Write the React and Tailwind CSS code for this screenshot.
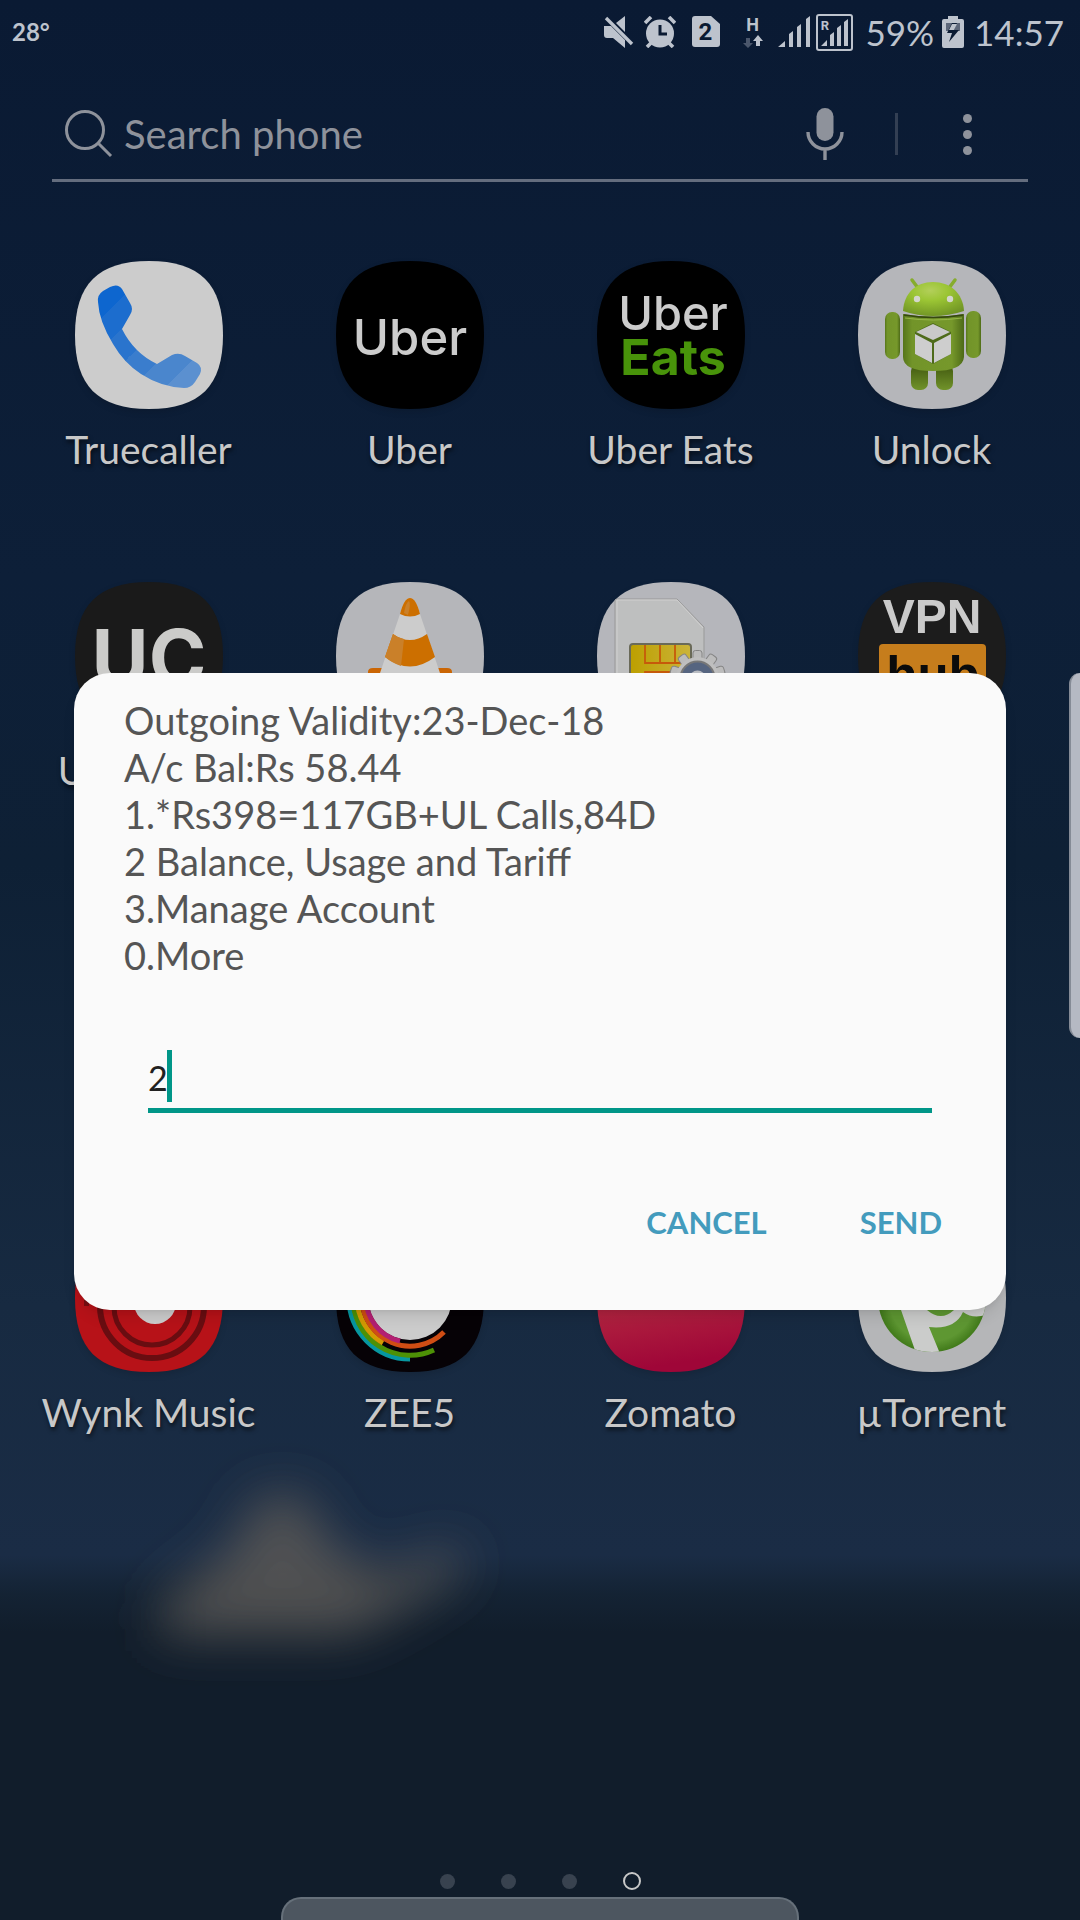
import React from "react";

const SQUIRCLE =
  "M0 74C0 23 23 0 74 0S148 23 148 74 125 148 74 148 0 125 0 74Z";

function Tile({ id, fill, children }) {
  return (
    <svg viewBox="0 0 148 148" className="size-[148px] drop-shadow-md" aria-hidden="true">
      <clipPath id={`${id}-clip`}>
        <path d={SQUIRCLE} />
      </clipPath>
      <g clipPath={`url(#${id}-clip)`}>
        <rect width="148" height="148" fill={fill} />
        {children}
      </g>
    </svg>
  );
}

function TruecallerIcon() {
  const bands = [
    ["0%", "27.7%", "#0d66cf"],
    ["27.7%", "38.3%", "#1c6dce"],
    ["38.3%", "50%", "#2a74cd"],
    ["50%", "61.3%", "#3a7dcd"],
    ["61.3%", "72.3%", "#4a86cd"],
    ["72.3%", "100%", "#5b90d0"],
  ];
  return (
    <Tile id="truecaller" fill="#cccccc">
      <linearGradient id="tc-bands" gradientUnits="userSpaceOnUse" x1="0" y1="0" x2="150" y2="150">
        {bands.map(([a, b, c]) => (
          <React.Fragment key={a}>
            <stop offset={a} stopColor={c} />
            <stop offset={b} stopColor={c} />
          </React.Fragment>
        ))}
      </linearGradient>
      <path
        fill="url(#tc-bands)"
        d="M23 41Q22 34 28 30L35 26Q43 22 47 28L55 42Q59 48 55 54L47 68Q59 92 82 103L97 94Q104 91 110 95L122 102Q128 106 125 113L120 121Q116 127 109 127Q86 126 66 113Q49 102 38 83Q24 60 23 41Z"
      />
    </Tile>
  );
}

function UberIcon() {
  return (
    <Tile id="uber" fill="#000000">
      <text x="74" y="94" textAnchor="middle" className="font-['Inter',sans-serif] text-[49px] font-medium" fill="#cccccc">
        Uber
      </text>
    </Tile>
  );
}

function UberEatsIcon() {
  return (
    <Tile id="ubereats" fill="#000000">
      <text x="76" y="69" textAnchor="middle" className="font-['Inter',sans-serif] text-[47px] font-medium" fill="#cccccc">
        Uber
      </text>
      <text x="76" y="114" textAnchor="middle" className="font-['Inter',sans-serif] text-[50px] font-bold" fill="#48930a">
        Eats
      </text>
    </Tile>
  );
}

function UnlockIcon() {
  return (
    <Tile id="unlock" fill="#b5b6ba">
      <radialGradient id="ul-head" cx="45%" cy="25%" r="85%">
        <stop offset="0" stopColor="#b3cf5a" />
        <stop offset=".35" stopColor="#9bc534" />
        <stop offset="1" stopColor="#698c22" />
      </radialGradient>
      <linearGradient id="ul-body" x1="0" x2="1" y1="0" y2="0">
        <stop offset="0" stopColor="#56751a" />
        <stop offset=".15" stopColor="#729429" />
        <stop offset=".8" stopColor="#76982b" />
        <stop offset="1" stopColor="#4d6a17" />
      </linearGradient>
      <linearGradient id="ul-leg" x1="0" x2="0" y1="0" y2="1">
        <stop offset="0" stopColor="#40570f" />
        <stop offset="1" stopColor="#71932a" />
      </linearGradient>
      <path d="M54 19l6 8M97 19l-6 8" stroke="#86ac2e" strokeWidth="3.5" strokeLinecap="round" />
      <rect x="53" y="103" width="17" height="26" rx="7" fill="url(#ul-leg)" />
      <rect x="78" y="103" width="17" height="26" rx="7" fill="url(#ul-leg)" />
      <rect x="27" y="51" width="15" height="47" rx="7" fill="url(#ul-body)" />
      <rect x="108" y="50" width="15" height="47" rx="7" fill="url(#ul-body)" />
      <path d="M45 50C46 32 58 21 75 21S105 32 106 50Q91 55 75 55T45 50Z" fill="url(#ul-head)" />
      <path d="M45 53Q75 58 106 53V96Q105 110 75 110T45 96Z" fill="url(#ul-body)" />
      <path d="M46 54Q75 59 105 54" fill="none" stroke="#35480f" strokeWidth="1.6" />
      <path d="M47 57Q75 61 104 57" fill="none" stroke="#96b64a" strokeWidth="1" />
      <circle cx="59" cy="38" r="3.2" fill="#d4d6cd" />
      <circle cx="92" cy="38" r="3.2" fill="#d4d6cd" />
      <path d="M57 71L75 62L93 71V93L75 103L57 93Z" fill="#4e6b1a" />
      <path d="M75 63L92 71L75 79L58 71Z" fill="#c9c9c9" />
      <path d="M57 73L74 82V102L57 93Z" fill="#cecece" />
      <path d="M93 73L76 82V102L93 93Z" fill="#cecece" />
    </Tile>
  );
}

function UrbanClapIcon() {
  return (
    <Tile id="urbanclap" fill="#1a1a1a">
      <text x="74" y="104" textAnchor="middle" className="font-['Inter',sans-serif] text-[78px] font-bold" fill="#cbcbc9">
        UC
      </text>
    </Tile>
  );
}

function VlcIcon() {
  return (
    <Tile id="vlc" fill="#b5b6ba">
      <path d="M32 96V90Q32 86 37 86H111Q116 86 116 90V148H32Z" fill="#cb6604" />
      <path d="M64 32Q68 16 74 16T84 32L104 91V110H44V91Z" fill="#cccccc" />
      <path d="M64 32Q68 16 74 16T84 32Q74 37 64 32Z" fill="#cc6f00" />
      <path d="M57 52Q74 64 91 52L99 75Q74 94 49 75Z" fill="#cc6f00" />
      <path d="M57 52Q62 56 68 57L65 84Q56 81 49 75Z" fill="#ca8029" />
      <path d="M68 31Q70 20 73 19Q75 21 72 33Z" fill="#ca8029" />
    </Tile>
  );
}

function SimIcon() {
  const teeth = [0, 36, 72, 108, 144, 180, 216, 252, 288, 324];
  return (
    <Tile id="sim" fill="#b5b6bb">
      <path d="M18 148V17H80L107 45V148Z" fill="#bebfbf" stroke="#999" strokeWidth="1" />
      <path d="M20 148V18H80L106 46" fill="none" stroke="#cfcfcf" strokeWidth="1" />
      <linearGradient id="sim-chip" x1="0" x2="1">
        <stop offset="0" stopColor="#bd9f00" />
        <stop offset="1" stopColor="#cbb43a" />
      </linearGradient>
      <rect x="33" y="62" width="61" height="60" rx="3" fill="url(#sim-chip)" stroke="#6a6a58" strokeWidth="2" />
      <path d="M48 63V81H94M63 63V81M78 63V81M48 100V90H80" fill="none" stroke="#c65a0a" strokeWidth="1.8" />
      <g stroke="#858585" strokeWidth="1">
        {teeth.map((a) => (
          <rect key={a} x="96" y="68.5" width="9" height="12" rx="2.5" fill="#bcbcbc" transform={`rotate(${a} 100.5 96.5)`} />
        ))}
      </g>
      <circle cx="100.5" cy="96.5" r="21.5" fill="#bfbfbf" />
      <circle cx="100.5" cy="96.5" r="17" fill="#566580" stroke="#777" strokeWidth="2" />
      <circle cx="100.5" cy="96.5" r="8" fill="#b8bbc1" />
    </Tile>
  );
}

function VpnHubIcon() {
  return (
    <Tile id="vpnhub" fill="#1c1c1c">
      <rect x="21" y="62" width="107" height="60" rx="4" fill="#c67d1c" />
      <text x="74" y="51" textAnchor="middle" className="font-['Liberation_Sans',sans-serif] text-[48px] font-bold" fill="#cacaca">
        VPN
      </text>
      <text x="75" y="111" textAnchor="middle" className="font-['Liberation_Sans',sans-serif] text-[51px] font-bold" fill="#0b0b0b">
        hub
      </text>
    </Tile>
  );
}

function WynkIcon() {
  return (
    <Tile id="wynk" fill="#b71218">
      <circle cx="77" cy="82" r="52" fill="none" stroke="#690d11" strokeWidth="6" />
      <circle cx="77" cy="83" r="38" fill="none" stroke="#690d11" strokeWidth="5" />
      <circle cx="80" cy="79" r="21" fill="#cccccc" />
      <path d="M9 74h5v8h-5z" fill="#7a0e12" />
    </Tile>
  );
}

function Zee5Icon() {
  return (
    <Tile id="zee5" fill="#060206">
      <circle cx="74" cy="74" r="42" fill="#cccccc" />
      <g fill="none" strokeWidth="5">
        <path d="M13 74A61 61 0 0 0 74 135" stroke="#0797a0" />
        <path d="M17 74A57 57 0 0 0 98 126" stroke="#4d9106" />
        <path d="M21 74A53 53 0 0 0 47 119" stroke="#d39a03" />
        <path d="M26 74A48 48 0 0 0 108 108" stroke="#cf4d14" />
        <path d="M30 74A44 44 0 0 0 64 117" stroke="#b31f72" />
      </g>
    </Tile>
  );
}

function ZomatoIcon() {
  return (
    <Tile id="zomato" fill="url(#zomato-fill)">
      <linearGradient id="zomato-fill" x1="0" y1="0" x2=".15" y2="1">
        <stop offset="0" stopColor="#bf3645" />
        <stop offset=".6" stopColor="#b0223f" />
        <stop offset="1" stopColor="#9f0638" />
      </linearGradient>
    </Tile>
  );
}

function UTorrentIcon() {
  return (
    <Tile id="utorrent" fill="#b5b6b8">
      <radialGradient id="ut-disc" cx="50%" cy="50%" r="50%">
        <stop offset=".8" stopColor="#5e9732" />
        <stop offset="1" stopColor="#417a1a" />
      </radialGradient>
      <clipPath id="ut-clip">
        <circle cx="74" cy="74" r="54" />
      </clipPath>
      <circle cx="74" cy="74" r="54" fill="url(#ut-disc)" />
      <g clipPath="url(#ut-clip)">
        <path d="M32 55H130V90Q116 96 105 88Q97 106 71 103L83 132H59L43 86Z" fill="#cbcccb" />
        <path d="M62 60L69 86Q83 98 96 86V60Z" fill="#5e9732" />
      </g>
    </Tile>
  );
}

const APPS = [
  { name: "Truecaller", Icon: TruecallerIcon, row: "row-start-1" },
  { name: "Uber", Icon: UberIcon, row: "row-start-1" },
  { name: "Uber Eats", Icon: UberEatsIcon, row: "row-start-1" },
  { name: "Unlock", Icon: UnlockIcon, row: "row-start-1" },
  { name: "UrbanClap", Icon: UrbanClapIcon, row: "row-start-2" },
  { name: "VLC", Icon: VlcIcon, row: "row-start-2", covered: true },
  { name: "SIM", Icon: SimIcon, row: "row-start-2", covered: true },
  { name: "VPNhub", Icon: VpnHubIcon, row: "row-start-2", covered: true },
  { name: "Wynk Music", Icon: WynkIcon, row: "row-start-4" },
  { name: "ZEE5", Icon: Zee5Icon, row: "row-start-4" },
  { name: "Zomato", Icon: ZomatoIcon, row: "row-start-4" },
  { name: "µTorrent", Icon: UTorrentIcon, row: "row-start-4" },
];

function StatusBar() {
  return (
    <header className="flex h-16 items-center justify-between pl-3 pr-4 text-[#bdc3cd]">
      <span className="text-[24px] font-bold">28°</span>
      <div className="flex items-center fill-current">
        <svg viewBox="0 0 30 32" className="h-8 w-[30px]" aria-label="Muted">
          <path d="M0 10H7L21 24V32L9 22H3Q0 22 0 19ZM21 0V16L12 7Z" />
          <path d="M2 2L28 28" stroke="currentColor" strokeWidth="3.4" />
        </svg>
        <svg viewBox="0 0 32 32" className="ml-[10px] size-8" aria-label="Alarm">
          <circle cx="16" cy="17.500" r="14" />
          <path d="M1 7L7 1M31 7L25 1M7 27L3 31M25 27L29 31" stroke="currentColor" strokeWidth="3.6" />
          <path d="M16 9V18H23" fill="none" stroke="#0a1a32" strokeWidth="3" />
        </svg>
        <svg viewBox="0 0 28 32" className="ml-4 h-8 w-7" aria-label="SIM 2">
          <path d="M3 0H19L28 8V28Q28 31 25 31H3Q0 31 0 28V3Q0 0 3 0Z" />
          <text x="13.500" y="24" textAnchor="middle" className="font-[Roboto,sans-serif] text-[24px] font-bold" fill="#0a1a32">2</text>
        </svg>
        <svg viewBox="0 0 20 34" className="ml-[23px] h-[34px] w-5" aria-label="HSPA data">
          <text x="9.500" y="16" textAnchor="middle" className="font-[Roboto,sans-serif] text-[18px] leading-none font-bold">H</text>
          <path d="M3 23H7V28H10L5 33L0 28H3Z" fill="#4a566b" />
          <path d="M13 31H17V26H20L15 20L10 26H13Z" />
        </svg>
        <svg viewBox="0 0 32 32" className="ml-[15px] size-8" aria-label="Signal">
          <path d="M0 31L7 25V31ZM11 18L15 15V31H11ZM19 11L23 8V31H19ZM28 3L32 0V31H28Z" />
        </svg>
        <svg viewBox="0 0 37 37" className="ml-[6px] size-[37px]" aria-label="Roaming signal">
          <rect x="1" y="1" width="35" height="35" rx="2" fill="none" stroke="currentColor" strokeWidth="2" />
          <text x="9" y="16" textAnchor="middle" className="font-[Roboto,sans-serif] text-[13px] font-bold">R</text>
          <path d="M5 32L11 26V32ZM14 21L18 18V32H14ZM21 14L25 11V32H21ZM28 8L32 5V32H28Z" />
        </svg>
        <span className="ml-3 text-[35px]">59%</span>
        <svg viewBox="0 0 22 32" className="ml-2 h-8 w-[22px]" aria-label="Charging">
          <path d="M6 0H16V3H20Q22 3 22 5V30Q22 32 20 32H2Q0 32 0 30V5Q0 3 2 3H6Z" />
          <path d="M4 7H18V15H4Z" fill="#5d677a" />
          <path d="M10 7L5 17H10L7 26L17 14H12L15 7Z" fill="#0a1a32" />
          <path d="M10 8L7 14H12L15 8Z" fill="#bdc3cd" />
        </svg>
        <time className="ml-[10px] text-[35px]">14:57</time>
      </div>
    </header>
  );
}

function SearchBar() {
  return (
    <form className="mx-[52px] mt-[33px] flex h-[85px] items-center border-b-[3px] border-[#646d7e] pb-2 pl-3 pr-14 text-[#8e929b]">
      <svg viewBox="0 0 50 50" className="size-[50px] shrink-0" fill="none" stroke="currentColor" strokeWidth="3" aria-hidden="true">
        <circle cx="21" cy="21" r="18.500" />
        <path d="M34 34L47 47" />
      </svg>
      <input
        type="search"
        aria-label="Search phone"
        placeholder="Search phone"
        className="ml-[10px] min-w-0 flex-1 bg-transparent text-[40px] leading-[48px] outline-none placeholder:text-[#8e929b] placeholder:opacity-100"
      />
      <button type="button" aria-label="Voice search">
        <svg viewBox="0 0 38 52" className="h-[52px] w-[38px]" aria-hidden="true">
          <rect x="10.500" y="0" width="17" height="33" rx="8.500" fill="currentColor" />
          <path d="M2 24A17 17 0 0 0 36 24M19 41V52" fill="none" stroke="currentColor" strokeWidth="3.400" />
        </svg>
      </button>
      <span className="ml-[51px] h-[42px] w-[3px] bg-[#333f53]" />
      <button type="button" aria-label="More options" className="ml-[65px] flex flex-col gap-[7px]">
        <span className="size-[9px] rounded-full bg-current" />
        <span className="size-[9px] rounded-full bg-current" />
        <span className="size-[9px] rounded-full bg-current" />
      </button>
    </form>
  );
}

function UssdDialog() {
  return (
    <form
      role="dialog"
      aria-label="USSD message"
      className="absolute inset-x-[74px] top-[673px] rounded-[36px] bg-[#fafafa] pb-[63px] pt-6 shadow-lg"
    >
      <p className="whitespace-pre-line px-[50px] text-[38px] leading-[47px] text-[#555555]">
        {`Outgoing Validity:23-Dec-18
A/c Bal:Rs 58.44
1.*Rs398=117GB+UL Calls,84D
2 Balance, Usage and Tariff
3.Manage Account
0.More`}
      </p>
      <div className="relative mx-[74px] mt-[67px] border-b-[5px] border-[#009688]">
        <input
          aria-label="Reply"
          defaultValue="2"
          className="block h-[62px] w-full bg-transparent text-[34px] text-[#212121] outline-none"
        />
        <span className="absolute left-[19px] top-1 h-[52px] w-[5px] bg-[#009688]" />
      </div>
      <div className="mt-[84px] flex justify-end gap-[93px] pr-16 text-[31px] font-bold leading-[50px] text-[#439bbd]">
        <button type="button">CANCEL</button>
        <button type="button">SEND</button>
      </div>
    </form>
  );
}

function DistantHill() {
  return (
    <svg viewBox="0 0 500 400" className="absolute left-[100px] top-[1440px] -z-10 h-[400px] w-[500px]" aria-hidden="true">
      <filter id="hill-blur" x="-40%" y="-60%" width="180%" height="220%">
        <feGaussianBlur stdDeviation="25" />
      </filter>
      <path
        filter="url(#hill-blur)"
        fill="#5b5855"
        fillOpacity=".85"
        d="M60 165L130 110L160 55H205L230 105L285 135L355 105L365 130L300 170L250 195H60Z"
      />
    </svg>
  );
}

export default function App() {
  return (
    <div className="relative isolate flex min-h-screen flex-col overflow-hidden bg-[linear-gradient(to_bottom,#0a1a33_0%,#0d1f38_30%,#0e2035_45%,#172a41_68%,#1a2c45_81%,#142334_83%,#111d2b_85%,#111d2b_100%)] font-[Lato,sans-serif]">
      <DistantHill />
      <StatusBar />
      <SearchBar />
      <main className="mt-[79px] grid auto-rows-[212px] grid-cols-4 gap-y-[109px] px-[18px]">
        {APPS.map(({ name, Icon, row, covered }) => (
          <button key={name} type="button" aria-label={name} className={`${row} flex flex-col items-center gap-4`}>
            <Icon />
            {!covered && (
              <span className="whitespace-nowrap text-[39px] leading-[48px] text-[#c8c8c8] [text-shadow:1px_3px_4px_rgba(0,0,0,0.6)]">
                {name}
              </span>
            )}
          </button>
        ))}
      </main>
      <nav aria-label="Pages" className="mb-[30px] mt-auto flex items-center justify-center gap-[46px]">
        <button type="button" aria-label="Page 1" className="size-[15px] rounded-full bg-[#38424f]" />
        <button type="button" aria-label="Page 2" className="size-[15px] rounded-full bg-[#38424f]" />
        <button type="button" aria-label="Page 3" className="size-[15px] rounded-full bg-[#38424f]" />
        <button type="button" aria-label="Page 4" className="size-[18px] rounded-full border-2 border-[#c8c8c8]" />
      </nav>
      <div className="absolute inset-x-[281px] bottom-0 h-[23px] rounded-t-[20px] border-2 border-b-0 border-[#66707a] bg-[#4d5660]" />
      <div className="absolute right-0 top-[673px] h-[365px] w-[11px] rounded-l-[11px] border-l-2 border-[#858b96] bg-[#b5b9c3]" />
      <UssdDialog />
    </div>
  );
}
